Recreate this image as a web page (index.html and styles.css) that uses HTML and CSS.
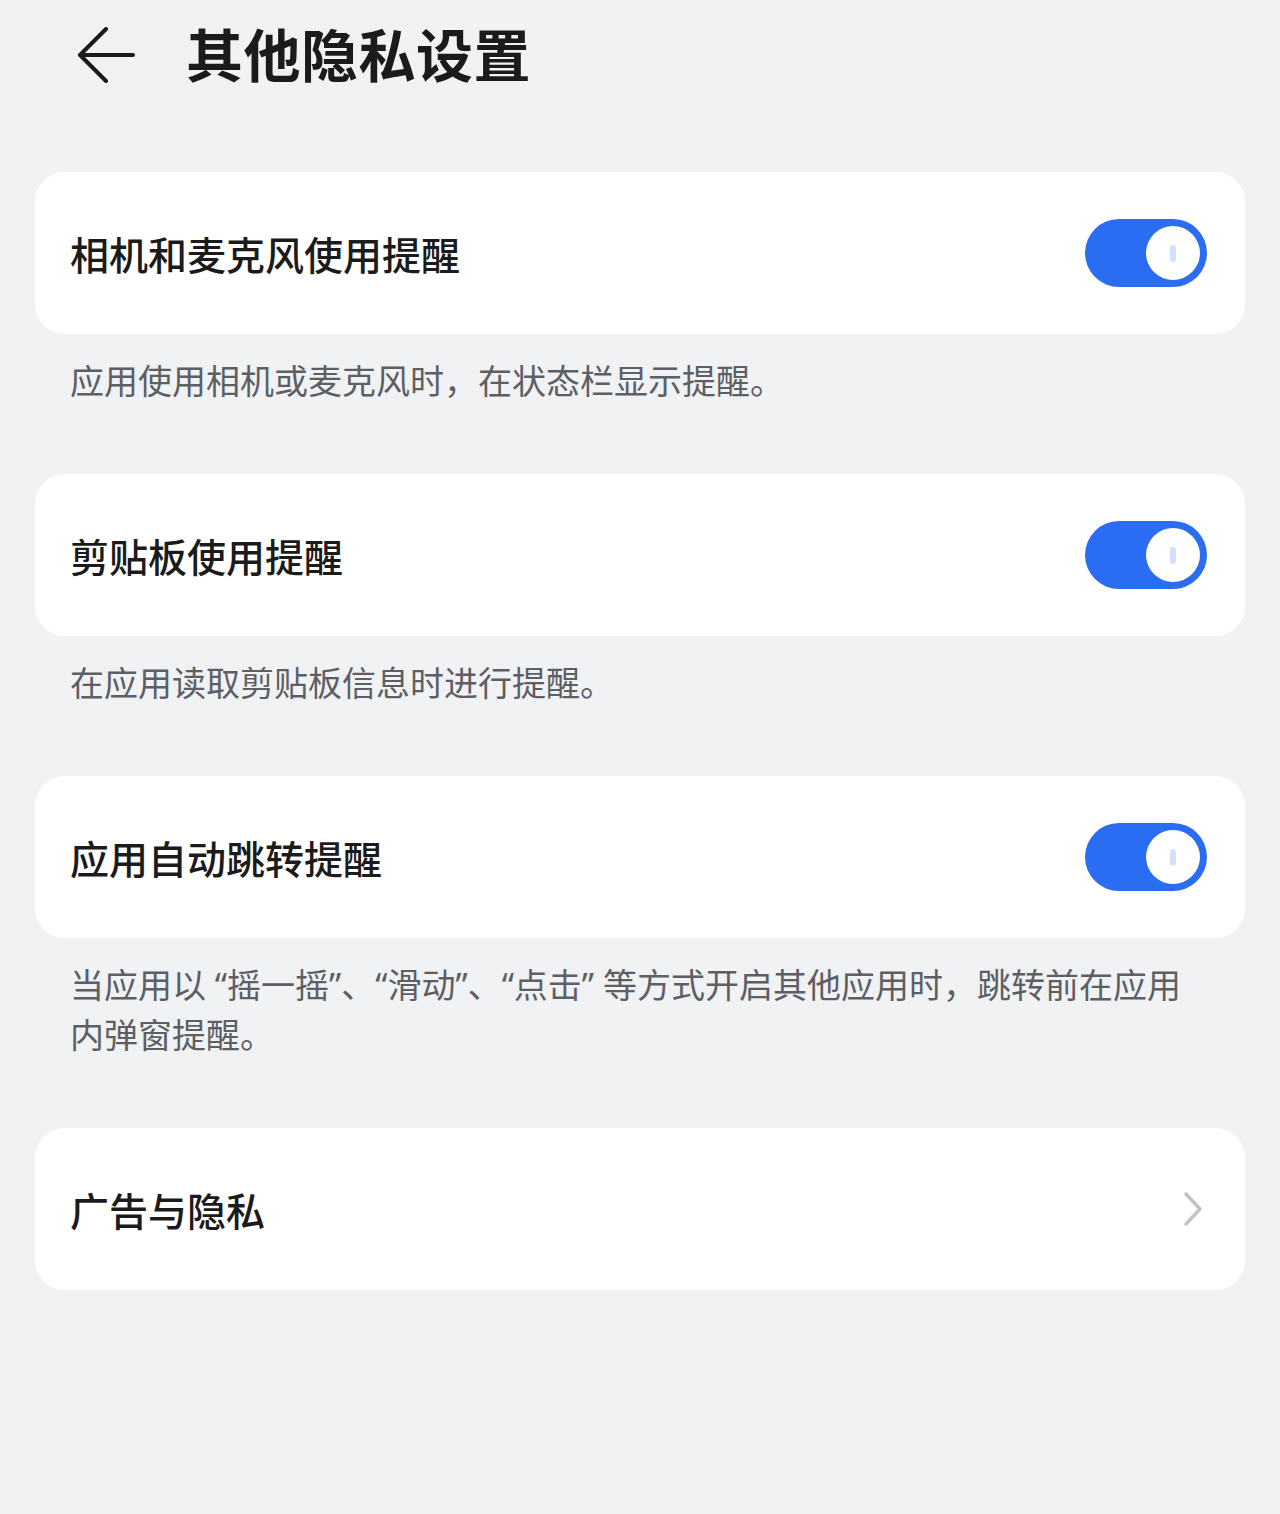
FILE: index.html
```html
<!DOCTYPE html>
<html lang="zh-CN">
<head>
    <meta charset="UTF-8">
    <meta name="viewport" content="width=device-width, initial-scale=1.0">
    <title>其他隐私设置</title>
    <link rel="stylesheet" href="styles.css">
</head>
<body>
    <header class="topbar">
        <span class="back">
            <svg width="58" height="56" viewBox="0 0 58 56">
                <path d="M56 28 H3 M29 2 L3 28 L29 54" fill="none" stroke="#1b1b1b" stroke-width="4" stroke-linecap="round" stroke-linejoin="round"/>
            </svg>
        </span>
        <h1>其他隐私设置</h1>
    </header>

    <main class="settings">
        <section class="group">
            <div class="card">
                <span class="card-title">相机和麦克风使用提醒</span>
                <span class="switch"><span class="knob"><span class="knob-mark"></span></span></span>
            </div>
            <p class="hint">应用使用相机或麦克风时，在状态栏显示提醒。</p>
        </section>

        <section class="group">
            <div class="card">
                <span class="card-title">剪贴板使用提醒</span>
                <span class="switch"><span class="knob"><span class="knob-mark"></span></span></span>
            </div>
            <p class="hint">在应用读取剪贴板信息时进行提醒。</p>
        </section>

        <section class="group">
            <div class="card">
                <span class="card-title">应用自动跳转提醒</span>
                <span class="switch"><span class="knob"><span class="knob-mark"></span></span></span>
            </div>
            <p class="hint">当应用以 “摇一摇”、“滑动”、“点击” 等方式开启其他应用时，跳转前在应用内弹窗提醒。</p>
        </section>

        <section class="group">
            <div class="card">
                <span class="card-title">广告与隐私</span>
                <svg class="chevron" width="20" height="36" viewBox="0 0 20 36">
                    <path d="M3 3 L17 18 L3 33" fill="none" stroke="#c3c3c5" stroke-width="3.5" stroke-linecap="round" stroke-linejoin="round"/>
                </svg>
            </div>
        </section>
    </main>
</body>
</html>
```

FILE: styles.css
```css
/* Page */
body {
    margin: 0;
    padding: 0 35px;
    background-color: #f1f2f4;
    font-family: "Noto Sans", "Noto Sans CJK SC", sans-serif;
    color: #1b1b1b;
}

/* Top bar */
.topbar {
    display: flex;
    align-items: center;
    height: 110px;
    padding-left: 42px;
}

.back {
    display: flex;
    width: 58px;
    height: 56px;
}

.topbar h1 {
    margin: 0 0 0 51px;
    font-size: 57px;
    font-weight: 700;
    line-height: 1;
    letter-spacing: 0.5px;
}

/* List */
.settings {
    padding-top: 62px;
}

.group {
    margin-bottom: 68px;
}

.card {
    display: flex;
    align-items: center;
    justify-content: space-between;
    height: 162px;
    padding: 0 38px 0 35px;
    background-color: #fff;
    border-radius: 30px;
    box-sizing: border-box;
}

.card-title {
    font-size: 39px;
    font-weight: 500;
}

.hint {
    margin: 0;
    padding: 22px 35px 0;
    font-size: 34px;
    line-height: 50px;
    color: #5d5f64;
}

/* Switch */
.switch {
    display: flex;
    justify-content: flex-end;
    align-items: center;
    width: 122px;
    height: 68px;
    padding: 0 7px;
    box-sizing: border-box;
    border-radius: 34px;
    background-color: #2a6cf2;
}

.knob {
    display: flex;
    align-items: center;
    justify-content: center;
    width: 54px;
    height: 54px;
    border-radius: 50%;
    background-color: #fff;
}

.knob-mark {
    width: 6px;
    height: 17px;
    border-radius: 3px;
    background-color: #d4e0fb;
}

.chevron {
    margin-right: 4px;
}
```
